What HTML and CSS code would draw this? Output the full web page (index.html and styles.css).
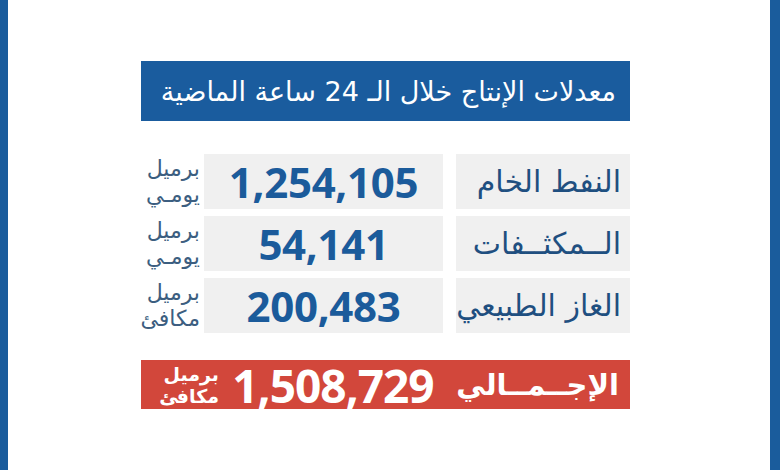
FILE: index.html
```html
<!DOCTYPE html>
<html lang="ar">
<head>
<meta charset="utf-8">
<link rel="stylesheet" href="styles.css">
</head>
<body>
<div class="frame">
  <div class="content">
    <div class="header" dir="rtl">معدلات الإنتاج خلال الـ 24 ساعة الماضية</div>
    <div class="table">
      <div class="label" dir="rtl">النفط الخام</div>
      <div class="value">1,254,105</div>
      <div class="unit" dir="rtl"><span>برميل</span><span>يومـي</span></div>

      <div class="label" dir="rtl">الــمكثــفات</div>
      <div class="value">54,141</div>
      <div class="unit" dir="rtl"><span>برميل</span><span>يومـي</span></div>

      <div class="label" dir="rtl">الغاز الطبيعي</div>
      <div class="value">200,483</div>
      <div class="unit" dir="rtl"><span>برميل</span><span>مكافئ</span></div>
    </div>
    <div class="total">
      <div class="total-label" dir="rtl">الإجــمــالي</div>
      <div class="total-value">1,508,729</div>
      <div class="total-unit" dir="rtl"><span>برميل</span><span>مكافئ</span></div>
    </div>
  </div>
</div>
</body>
</html>
```
FILE: styles.css
```css
html, body {
  margin: 0;
  padding: 0;
  background: #ffffff;
}
.frame {
  width: 780px;
  height: 470px;
  box-sizing: border-box;
  border-left: 8px solid #1a5c9c;
  border-right: 10px solid #1a5c9c;
  background: #fff;
  overflow: hidden;
}
.content {
  width: 489px;
  margin-left: 133px;
  padding-top: 61px;
  display: flex;
  flex-direction: column;
}
.header {
  height: 60px;
  background: #1a5c9e;
  color: #ffffff;
  font-family: "DejaVu Sans", sans-serif;
  font-size: 27px;
  display: flex;
  align-items: center;
  padding-right: 14px;
  box-sizing: border-box;
}
.table {
  margin-top: 33px;
  display: grid;
  direction: rtl;
  grid-template-columns: 187px 239px 1fr;
  grid-auto-rows: 55px;
  row-gap: 7px;
}
.label {
  background: #f0f0f0;
  margin-left: 13px;
  color: #1f4f80;
  font-family: "DejaVu Sans", sans-serif;
  font-size: 30px;
  display: flex;
  align-items: center;
  padding-right: 9px;
  white-space: nowrap;
}
.value {
  background: #f0f0f0;
  color: #1b5b9b;
  font-family: "Open Sans", sans-serif;
  font-weight: 700;
  font-size: 42px;
  letter-spacing: -0.3px;
  display: flex;
  align-items: center;
  justify-content: center;
  direction: ltr;
}
.unit {
  display: flex;
  flex-direction: column;
  justify-content: center;
  color: #3c5e80;
  font-family: "DejaVu Sans", sans-serif;
  font-size: 22px;
  line-height: 26px;
  padding-right: 4px;
  white-space: nowrap;
}
.total {
  margin-top: 27px;
  height: 49px;
  background: #d2473b;
  color: #ffffff;
  display: flex;
  direction: rtl;
  align-items: center;
}
.total-label {
  width: 192px;
  box-sizing: border-box;
  padding-right: 11px;
  font-family: "DejaVu Sans", sans-serif;
  font-weight: 700;
  font-size: 29px;
  white-space: nowrap;
}
.total-value {
  width: 210px;
  text-align: center;
  direction: ltr;
  font-family: "Open Sans", sans-serif;
  font-weight: 700;
  font-size: 46px;
  letter-spacing: -1px;
}
.total-unit {
  flex: 1;
  display: flex;
  flex-direction: column;
  padding-right: 9px;
  font-family: "DejaVu Sans", sans-serif;
  font-weight: 700;
  font-size: 19px;
  line-height: 22px;
  white-space: nowrap;
}
```
